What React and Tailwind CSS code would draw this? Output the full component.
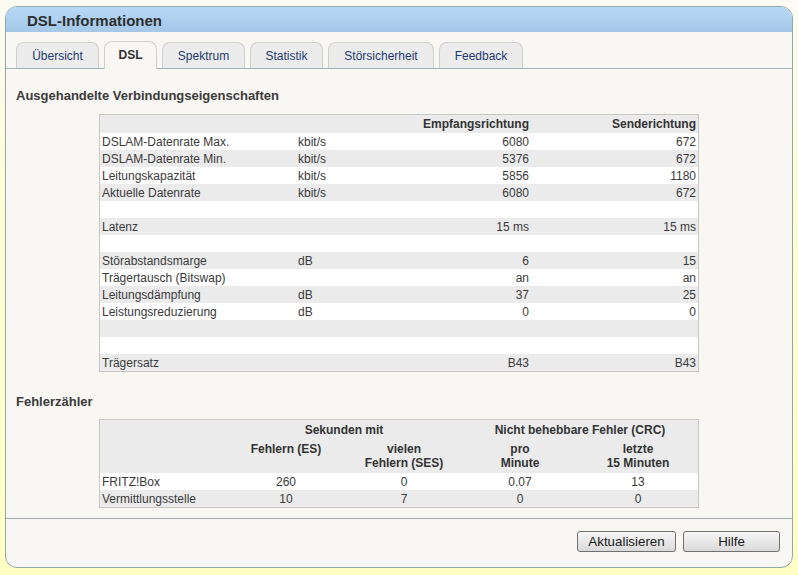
import React from "react";

const rows1 = [
  ["DSLAM-Datenrate Max.", "kbit/s", "6080", "672"],
  ["DSLAM-Datenrate Min.", "kbit/s", "5376", "672"],
  ["Leitungskapazität", "kbit/s", "5856", "1180"],
  ["Aktuelle Datenrate", "kbit/s", "6080", "672"],
  ["", "", "", ""],
  ["Latenz", "", "15 ms", "15 ms"],
  ["", "", "", ""],
  ["Störabstandsmarge", "dB", "6", "15"],
  ["Trägertausch (Bitswap)", "", "an", "an"],
  ["Leitungsdämpfung", "dB", "37", "25"],
  ["Leistungsreduzierung", "dB", "0", "0"],
  ["", "", "", ""],
  ["", "", "", ""],
  ["Trägersatz", "", "B43", "B43"],
];

const rows2 = [
  ["FRITZ!Box", "260", "0", "0.07", "13"],
  ["Vermittlungsstelle", "10", "7", "0", "0"],
];

const tabs = [
  { label: "Übersicht", w: "w-[83px]" },
  { label: "DSL", w: "w-[53px]", active: true },
  { label: "Spektrum", w: "w-[83px]" },
  { label: "Statistik", w: "w-[73px]" },
  { label: "Störsicherheit", w: "w-[106px]" },
  { label: "Feedback", w: "w-[84px]" },
];

export default function App() {
  return (
    <div className="w-[798px] h-[575px] overflow-hidden bg-[linear-gradient(to_bottom,#fbfbf3_0%,#fefed6_35%,#ffffc4_100%)] pt-[6px] px-[5px] font-['Liberation_Sans',Arial,sans-serif] text-[12px] text-[#3a3a3a]">
      <div className="h-[562px] flex flex-col border border-[#90a8a8] rounded-[12px] overflow-hidden bg-[#f8f7f3]">
        {/* header */}
        <div className="h-[25px] shrink-0 flex items-center pl-[21px] pt-[2px] bg-[linear-gradient(to_bottom,#b8d9f7,#a4c7e7)]">
          <span className="text-[15px] font-bold text-[#2e2e2e] leading-none">DSL-Informationen</span>
        </div>
        {/* tabs */}
        <div className="h-[37px] shrink-0 flex items-end gap-[5px] pl-[10px] border-b border-[#a3b2b2]">
          {tabs.map((t) =>
            t.active ? (
              <div
                key={t.label}
                className={`${t.w} h-[28px] mb-[-1px] flex items-center justify-center pb-[1px] bg-[#f8f7f3] border border-b-0 border-[#cfcfcf] rounded-t-[8px] font-bold text-[#333]`}
              >
                {t.label}
              </div>
            ) : (
              <div
                key={t.label}
                className={`${t.w} h-[26px] flex items-center justify-center bg-[#ececec] border border-b-0 border-[#cfcfcf] rounded-t-[8px] text-[#1e3a70]`}
              >
                {t.label}
              </div>
            )
          )}
        </div>
        {/* content */}
        <div className="flex-1 pl-[10px] pt-[19px]">
          <div className="text-[13px] leading-[16px] font-bold text-[#3b3b3b]">
            Ausgehandelte Verbindungseigenschaften
          </div>
          <div className="ml-[83px] mt-[10px] w-[600px] border border-[#c8c8c0]">
            <div className="grid grid-cols-[196px_104px_131px_167px] h-[18px] items-center bg-[#ebebeb] font-bold text-[#333]">
              <div />
              <div />
              <div className="text-right px-[2px]">Empfangsrichtung</div>
              <div className="text-right px-[2px]">Senderichtung</div>
            </div>
            {rows1.map((r, i) => (
              <div
                key={i}
                className={`grid grid-cols-[196px_104px_131px_167px] h-[17px] items-center ${i % 2 === 0 ? "bg-white" : "bg-[#ebebeb]"}`}
              >
                <div className="px-[2px] whitespace-nowrap">{r[0]}</div>
                <div className="px-[2px]">{r[1]}</div>
                <div className="px-[2px] text-right">{r[2]}</div>
                <div className="px-[2px] text-right">{r[3]}</div>
              </div>
            ))}
          </div>

          <div className="mt-[22px] text-[13px] leading-[16px] font-bold text-[#3b3b3b]">Fehlerzähler</div>
          <div className="ml-[83px] mt-[9px] w-[600px] border border-[#c8c8c0]">
            <div className="bg-[#ebebeb] font-bold text-[#333] h-[53px]">
              <div className="grid grid-cols-[126px_236px_236px] h-[20px] items-center text-center">
                <div />
                <div>Sekunden mit</div>
                <div>Nicht behebbare Fehler (CRC)</div>
              </div>
              <div className="grid grid-cols-[126px_120px_116px_116px_120px] pt-[2px] leading-[14px] text-center">
                <div />
                <div>Fehlern (ES)</div>
                <div>
                  vielen
                  <br />
                  Fehlern (SES)
                </div>
                <div>
                  pro
                  <br />
                  Minute
                </div>
                <div>
                  letzte
                  <br />
                  15 Minuten
                </div>
              </div>
            </div>
            {rows2.map((r, i) => (
              <div
                key={i}
                className={`grid grid-cols-[126px_120px_116px_116px_120px] h-[17px] items-center ${i % 2 === 0 ? "bg-white" : "bg-[#ebebeb]"}`}
              >
                <div className="px-[2px] whitespace-nowrap">{r[0]}</div>
                <div className="text-center">{r[1]}</div>
                <div className="text-center">{r[2]}</div>
                <div className="text-center">{r[3]}</div>
                <div className="text-center">{r[4]}</div>
              </div>
            ))}
          </div>
        </div>
        {/* footer */}
        <div className="h-[49px] shrink-0 border-t border-[#9aabab] flex justify-end items-start gap-[7px] pt-[12px] pr-[12px]">
          <button className="w-[99px] h-[21px] border border-[#707070] rounded-[3px] bg-[linear-gradient(to_bottom,#f6f6f6,#dadada)] text-[13.33px] leading-none text-[#1a1a1a]">
            Aktualisieren
          </button>
          <button className="w-[97px] h-[21px] border border-[#707070] rounded-[3px] bg-[linear-gradient(to_bottom,#f6f6f6,#dadada)] text-[13.33px] leading-none text-[#1a1a1a]">
            Hilfe
          </button>
        </div>
      </div>
    </div>
  );
}
